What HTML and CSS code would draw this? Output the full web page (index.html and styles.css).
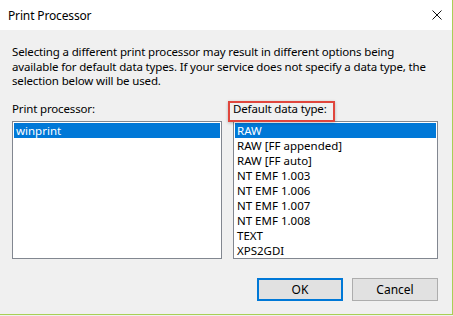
FILE: index.html
```html
<html>

<head>
    <meta charset="UTF-8" />
    <title>Print Processor</title>
    <link rel="stylesheet" href="styles.css">
</head>

<body>
    <div class="window">
        <div class="titlebar">
            <span class="title">Print Processor</span>
            <svg class="close" width="10" height="10" viewBox="0 0 10 10">
                <path d="M0.5 0.5 L9.5 9.5 M9.5 0.5 L0.5 9.5" stroke="#111" stroke-width="1" fill="none" />
            </svg>
        </div>
        <div class="content">
            <p class="desc">Selecting a different print processor may result in different options being<br>
                available for default data types. If your service does not specify a data type, the<br>
                selection below will be used.</p>
            <div class="lists">
                <div class="col">
                    <div class="label">Print processor:</div>
                    <ul class="listbox left">
                        <li class="sel">winprint</li>
                    </ul>
                </div>
                <div class="col">
                    <div class="label"><span class="marked">Default data type:</span></div>
                    <ul class="listbox right">
                        <li class="sel">RAW</li>
                        <li>RAW [FF appended]</li>
                        <li>RAW [FF auto]</li>
                        <li>NT EMF 1.003</li>
                        <li>NT EMF 1.006</li>
                        <li>NT EMF 1.007</li>
                        <li>NT EMF 1.008</li>
                        <li>TEXT</li>
                        <li>XPS2GDI</li>
                    </ul>
                </div>
            </div>
            <div class="buttons">
                <button class="btn default">OK</button>
                <button class="btn">Cancel</button>
            </div>
        </div>
    </div>
</body>

</html>
```
FILE: styles.css
```css
body {
    margin: 0;
    padding: 0;
    background-color: #f0f0f0;
    font-family: 'Noto Sans', sans-serif;
    font-size: 11.5px;
    letter-spacing: -0.15px;
    color: #000;
}

.window {
    width: 453px;
    height: 315px;
    box-sizing: border-box;
    background-color: #f0f0f0;
    border-right: 1px solid #a9cf55;
    border-bottom: 1px solid #a9cf55;
}

.titlebar {
    height: 30px;
    background-color: #fff;
    display: flex;
    align-items: center;
    padding: 0 10px 0 8px;
    font-size: 12px;
}

.title {
    flex: 1;
}

.content {
    padding: 0 14px 0 12px;
}

.desc {
    margin: 0;
    padding-top: 15px;
    line-height: 14.7px;
    white-space: nowrap;
}

.lists {
    display: flex;
    gap: 11px;
    margin-top: 12px;
}

.label {
    height: 15px;
    line-height: 15px;
    margin-bottom: 5px;
}

.marked {
    position: relative;
}

/* annotation box round the label */
.marked::after {
    content: "";
    position: absolute;
    left: -5px;
    top: 0;
    width: 107px;
    height: 21px;
    border: 2px solid #e0463d;
    box-sizing: border-box;
    box-shadow: 0 1px 3px rgba(0, 0, 0, 0.25);
}

.listbox {
    list-style: none;
    margin: 0;
    padding: 1px;
    height: 138px;
    box-sizing: border-box;
    background-color: #fff;
    border: 1px solid #828790;
}

.listbox.left {
    width: 210px;
}

.listbox.right {
    width: 205px;
}

.listbox li {
    height: 15px;
    line-height: 15px;
    padding-left: 2px;
    white-space: nowrap;
    font-size: 11.5px;
    letter-spacing: 0;
    overflow: hidden;
}

.listbox li.sel {
    background-color: #0078d7;
    color: #fff;
}

.buttons {
    display: flex;
    justify-content: flex-end;
    gap: 9px;
    margin-top: 19px;
}

.btn {
    width: 86px;
    height: 23px;
    box-sizing: border-box;
    background-color: #e1e1e1;
    border: 1px solid #adadad;
    font-family: 'Noto Sans', sans-serif;
    font-size: 12px;
    color: #000;
    padding: 0;
}

.btn.default {
    border: 2px solid #0078d7;
}
```
